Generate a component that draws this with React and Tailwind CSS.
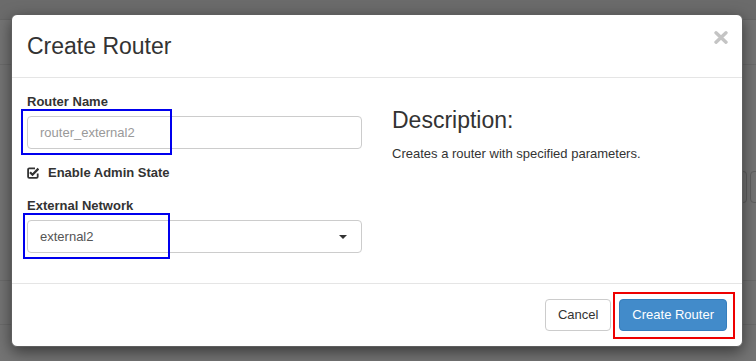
import React from "react";

function CheckSquare() {
  return (
    <svg width="12" height="12" viewBox="0 0 12 12" className="block">
      <path d="M8 1.3H2.3C1.6 1.3 1.1 1.8 1.1 2.5v7.2c0 .7.5 1.2 1.2 1.2h7.2c.7 0 1.2-.5 1.2-1.2V6.6" fill="none" stroke="#333" strokeWidth="1.8" />
      <path d="M3 5.2l2.5 2.5L11.4 1.6" fill="none" stroke="#333" strokeWidth="2.3" />
    </svg>
  );
}

function CloseX() {
  return (
    <svg width="14" height="13" viewBox="0 0 14 13" className="block">
      <path d="M2 1.8L12 11.2M12 1.8L2 11.2" stroke="#c4c4c4" strokeWidth="3.4" strokeLinecap="round" />
    </svg>
  );
}

export default function App() {
  return (
    <div
      className="relative w-[756px] h-[361px] overflow-hidden bg-[#747474]"
      style={{ fontFamily: '"Liberation Sans", Arial, sans-serif' }}
    >
      {/* page behind the overlay */}
      <div className="flex flex-col">
        <div className="h-[20px] bg-[#6b6b6b] border-b border-[#666]" />
        <div className="h-[45px] border-b border-[#6b6b6b]" />
        <div className="h-[106px]" />
        <div className="flex justify-end gap-[3px] h-[32px] -mr-[6px]">
          <div className="w-[5px] rounded-r-[4px] border border-l-0 border-[#5f5f5f]" />
          <div className="w-[12px] rounded-[4px] border border-[#5f5f5f]" />
        </div>
        <div className="h-[78px] border-b border-[#6b6b6b]" />
        <div className="h-[44px] border-b border-[#6b6b6b]" />
      </div>

      {/* modal */}
      <div className="absolute left-[11px] top-[14px] w-[732px] h-[333px] bg-white border border-[#5e5e5e] rounded-[6px] shadow-[0_5px_15px_rgba(0,0,0,0.5)] flex flex-col text-[#333]">
        <div className="flex items-start justify-between px-[15px] py-[15px] border-b border-[#e5e5e5]">
          <h4 className="text-[23px] leading-[32px] font-normal text-[#333]">Create Router</h4>
          <div className="mt-[1px] -mr-[1px]">
            <CloseX />
          </div>
        </div>

        <div className="h-[205px] px-[15px] pt-[15px] flex">
          <div className="w-[335px] flex flex-col">
            <label className="text-[13px] leading-[18px] font-bold mb-[5px]">Router Name</label>
            <div className="h-[33px] border border-[#ccc] rounded-[4px] flex items-center px-[12px] text-[13px] text-[#999]">
              router_external2
            </div>
            <div className="mt-[15px] h-[18px] flex items-center gap-[9px]">
              <CheckSquare />
              <span className="text-[13px] leading-[18px] font-bold">Enable Admin State</span>
            </div>
            <label className="mt-[15px] text-[13px] leading-[18px] font-bold mb-[5px]">External Network</label>
            <div className="h-[33px] border border-[#ccc] rounded-[4px] flex items-center justify-between pl-[12px] pr-[14px] text-[13px] text-[#555]">
              <span>external2</span>
              <span className="w-0 h-0 border-t-[4px] border-t-[#333] border-x-[4px] border-x-transparent" />
            </div>
          </div>
          <div className="w-[335px] ml-[30px] flex flex-col">
            <h3 className="mt-[15px] text-[23px] leading-[25px] font-normal">Description:</h3>
            <p className="mt-[12px] text-[13px] leading-[18px]">Creates a router with specified parameters.</p>
          </div>
        </div>

        <div className="flex-1 border-t border-[#e5e5e5] flex items-center justify-end gap-[8px] px-[15px]">
          <button className="h-[32px] px-[12px] border border-[#ccc] rounded-[4px] bg-white text-[13px] leading-[18px] text-[#333]">
            Cancel
          </button>
          <button className="h-[32px] px-[12px] border border-[#357ebd] rounded-[4px] bg-[#428bca] text-[13px] leading-[18px] text-white">
            Create Router
          </button>
        </div>
      </div>

      {/* annotation boxes */}
      <div className="absolute left-[21px] top-[109px] w-[151px] h-[46px] border-2 border-[#0000ee]" />
      <div className="absolute left-[23px] top-[213px] w-[147px] h-[46px] border-2 border-[#0000ee]" />
      <div className="absolute left-[613px] top-[292px] w-[122px] h-[47px] border-2 border-[#ee0000]" />
    </div>
  );
}
